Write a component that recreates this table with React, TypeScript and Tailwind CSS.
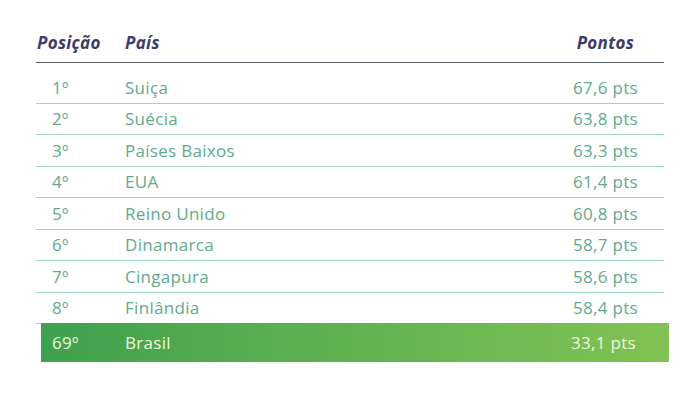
import React from 'react';

const ROWS: { pos: string; country: string; pts: string }[] = [
  { pos: '1º', country: 'Suiça', pts: '67,6 pts' },
  { pos: '2º', country: 'Suécia', pts: '63,8 pts' },
  { pos: '3º', country: 'Países Baixos', pts: '63,3 pts' },
  { pos: '4º', country: 'EUA', pts: '61,4 pts' },
  { pos: '5º', country: 'Reino Unido', pts: '60,8 pts' },
  { pos: '6º', country: 'Dinamarca', pts: '58,7 pts' },
  { pos: '7º', country: 'Cingapura', pts: '58,6 pts' },
  { pos: '8º', country: 'Finlândia', pts: '58,4 pts' },
];

const RankRow: React.FC<{ pos: string; country: string; pts: string }> = ({ pos, country, pts }) => (
  <div className="flex items-center h-[31.5px] border-b border-[#9fd3bf] text-[#5eab8c]">
    <span className="w-[89px] pl-[16px]">{pos}</span>
    <span className="flex-1">{country}</span>
    <span className="pr-[26px]">{pts}</span>
  </div>
);

export default function App() {
  return (
    <div className="w-[694px] h-[403px] bg-white font-['Open_Sans',sans-serif] text-[17px] tracking-[0.3px] pt-[32px]">
      <div className="ml-[36px] w-[628px]">
        <div className="flex items-end h-[31px] border-b border-[#555a66] text-[#3d3b6e] font-bold italic text-[17px] tracking-[0.3px] pb-[7px]">
          <span className="w-[89px] pl-[1px]">Posição</span>
          <span className="flex-1">País</span>
          <span className="pr-[30px]">Pontos</span>
        </div>
        <div className="pt-[9px]">
          {ROWS.map((r) => (
            <RankRow key={r.pos} {...r} />
          ))}
        </div>
        <div className="ml-[5px] -mr-[5px] -mt-[1px] flex items-center h-[39px] bg-gradient-to-r from-[#3ea14e] to-[#80c353] text-[#eef8dc]">
          <span className="w-[84px] pl-[11px]">69º</span>
          <span className="flex-1">Brasil</span>
          <span className="pr-[33px]">33,1 pts</span>
        </div>
      </div>
    </div>
  );
}
